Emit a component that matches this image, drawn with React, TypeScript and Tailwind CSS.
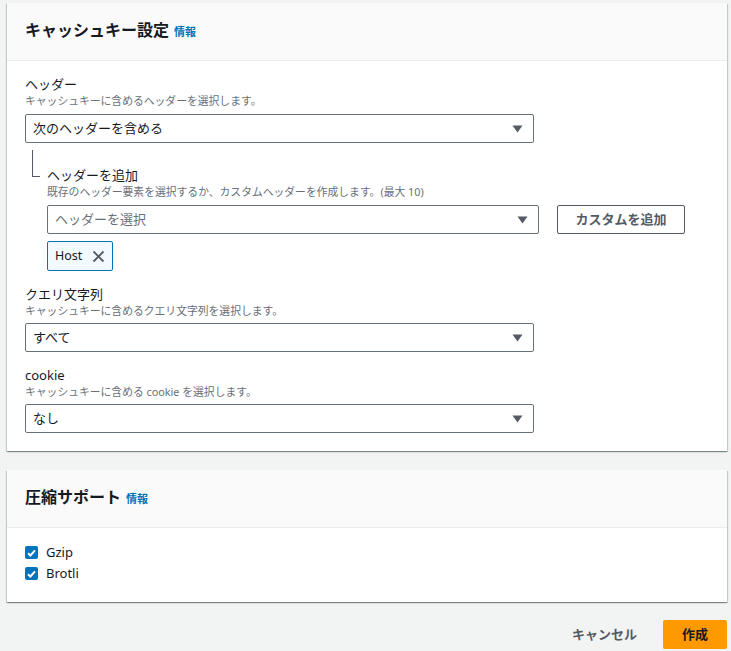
import React from 'react'

const font = { fontFamily: '"Noto Sans", "Noto Sans CJK JP", sans-serif' }

function Caret() {
    return (
        <svg width="11" height="8" viewBox="0 0 11 8" className="shrink-0">
            <path d="M0.5 0.5 L10.5 0.5 L5.5 7.5 Z" fill="#545b64" />
        </svg>
    )
}

function Select({ value, placeholder, className }: { value?: string; placeholder?: string; className: string }) {
    return (
        <div className={`h-[29px] border border-[#687078] rounded-[2px] bg-white flex items-center justify-between pl-[7px] pr-[10px] ${className}`}>
            {value
                ? <span className="text-[13px] text-[#16191f]">{value}</span>
                : <span className="text-[13px] text-[#687078]">{placeholder}</span>}
            <Caret />
        </div>
    )
}

function Field({ label, desc }: { label: string; desc: string }) {
    return (
        <div>
            <div className="text-[13px] leading-[20px] text-[#16191f]">{label}</div>
            <div className="text-[10.8px] leading-[14px] text-[#687078]">{desc}</div>
        </div>
    )
}

function Header({ title }: { title: string }) {
    return (
        <div className="h-[58px] bg-[#fafafa] border-b border-[#eaeded] flex items-center px-[18px] pb-[3px]">
            <h2 className="text-[16px] font-bold text-[#16191f] leading-none">{title}</h2>
            <span className="ml-[5px] mt-[3px] text-[11px] font-bold text-[#0073bb] leading-none">情報</span>
        </div>
    )
}

function Check({ label }: { label: string }) {
    return (
        <div className="flex items-center h-[21px]">
            <span className="w-[13px] h-[13px] rounded-[2px] bg-[#0073bb] flex items-center justify-center">
                <svg width="9" height="8" viewBox="0 0 9 8">
                    <path d="M1 4.2 L3.4 6.5 L8 1.3" stroke="white" strokeWidth="2" fill="none" />
                </svg>
            </span>
            <span className="ml-[8px] text-[13px] text-[#16191f]">{label}</span>
        </div>
    )
}

const cardShadow = 'shadow-[0_1px_1px_0_rgba(0,28,36,0.3),1px_1px_1px_0_rgba(0,28,36,0.15),-1px_1px_1px_0_rgba(0,28,36,0.15)]'

export default function App() {
    return (
        <div style={font} className="w-[731px] h-[651px] bg-[#f2f3f3] pl-[7px] pr-[4px] pt-[3px] overflow-hidden">
            {/* ── キャッシュキー設定 ─────────────────────────── */}
            <div className={`bg-white ${cardShadow}`}>
                <Header title="キャッシュキー設定" />
                <div className="px-[18px] pt-[13px] pb-[18px]">
                    <Field label="ヘッダー" desc="キャッシュキーに含めるヘッダーを選択します。" />
                    <Select value="次のヘッダーを含める" className="mt-[6px] w-[509px]" />

                    <div className="flex">
                        <div className="w-[22px] shrink-0">
                            <div className="ml-[7px] mt-[7px] w-[8px] h-[27px] border-l border-b border-[#545b64]" />
                        </div>
                        <div className="pt-[22px] flex-1">
                            <Field label="ヘッダーを追加" desc="既存のヘッダー要素を選択するか、カスタムヘッダーを作成します。(最大 10)" />
                            <div className="mt-[6px] flex items-center">
                                <Select placeholder="ヘッダーを選択" className="w-[492px]" />
                                <button className="ml-[18px] w-[128px] h-[29px] border border-[#545b64] rounded-[2px] bg-white text-[13px] font-bold text-[#545b64]">
                                    カスタムを追加
                                </button>
                            </div>
                            <div className="mt-[7px] inline-flex items-center h-[30px] px-[7px] border border-[#0073bb] rounded-[2px] bg-[#f1faff]">
                                <span className="text-[12.5px] text-[#16191f]">Host</span>
                                <svg width="13" height="13" viewBox="0 0 13 13" className="ml-[10px]">
                                    <path d="M1.5 1.5 L11.5 11.5 M11.5 1.5 L1.5 11.5" stroke="#545b64" strokeWidth="1.8" />
                                </svg>
                            </div>
                        </div>
                    </div>

                    <div className="mt-[13px]">
                        <Field label="クエリ文字列" desc="キャッシュキーに含めるクエリ文字列を選択します。" />
                        <Select value="すべて" className="mt-[5px] w-[509px]" />
                    </div>

                    <div className="mt-[13px]">
                        <Field label="cookie" desc="キャッシュキーに含める cookie を選択します。" />
                        <Select value="なし" className="mt-[5px] w-[509px]" />
                    </div>
                </div>
            </div>

            {/* ── 圧縮サポート ─────────────────────────────── */}
            <div className={`mt-[19px] bg-white ${cardShadow}`}>
                <Header title="圧縮サポート" />
                <div className="px-[18px] pt-[14px] pb-[18px]">
                    <Check label="Gzip" />
                    <Check label="Brotli" />
                </div>
            </div>

            {/* ── footer ─────────────────────────────────── */}
            <div className="mt-[18px] flex justify-end items-center">
                <button className="h-[29px] px-[18px] text-[13px] font-bold text-[#545b64]">キャンセル</button>
                <button className="ml-[8px] h-[29px] w-[64px] rounded-[2px] bg-[#ff9900] text-[13px] font-bold text-[#16191f]">作成</button>
            </div>
        </div>
    )
}
